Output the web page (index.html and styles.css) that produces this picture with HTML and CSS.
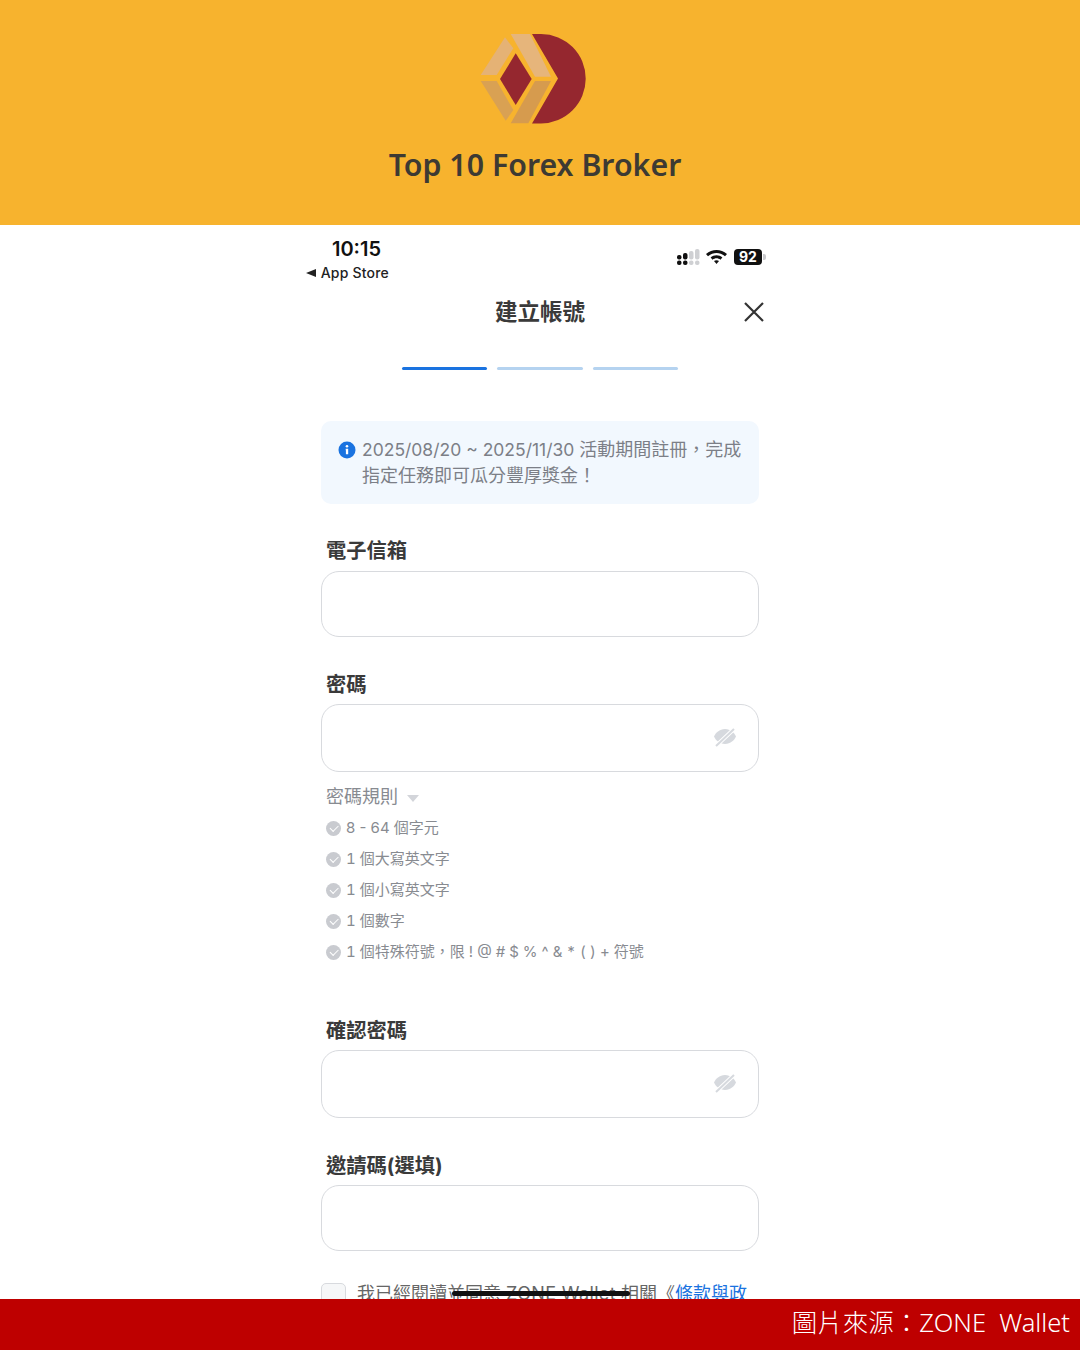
FILE: index.html
```html
<!DOCTYPE html>
<html lang="zh-Hant">
<head>
  <meta charset="UTF-8">
  <meta name="viewport" content="width=device-width, initial-scale=1.0">
  <title>Top 10 Forex Broker - 建立帳號</title>
  <link rel="stylesheet" href="styles.css">
</head>
<body>
  <header class="brand">
    <svg class="brand-logo" viewBox="0 0 108 98" aria-hidden="true">
      <path fill="#95272f" d="M52 4H61A44.7 44.7 0 0 1 61 93.4H52L78 48.5Z"/>
      <path fill="#95272f" d="M35.7 23.3L51.7 49L35.7 75L20 49Z"/>
      <path fill="#e5b275" d="M25 7.3L33.3 18.3L16.7 45H.7Z"/>
      <path fill="#e6b57b" d="M30.7 4H50L71 46.7H55Z"/>
      <path fill="#d9a153" d="M.7 51H16.7L33.3 80L25.7 90.7Z"/>
      <path fill="#d69b4e" d="M55 51H71L48.3 93.3H30.7Z"/>
    </svg>
    <h2 class="brand-name">Top 10 Forex Broker</h2>
  </header>

  <main class="phone">
    <div class="status-bar">
      <div class="status-left">
        <div class="clock">10:15</div>
        <div class="back-app"><span class="back-arrow"></span>App Store</div>
      </div>
      <div class="status-right">
        <svg width="24" height="16" viewBox="0 0 24 16" aria-hidden="true">
          <g fill="#111">
            <rect x="0" y="6" width="4.500" height="4.500" rx="2"/><rect x="0" y="11.500" width="4.500" height="4.500" rx="2"/>
            <rect x="6" y="4" width="4.500" height="6.500" rx="2"/><rect x="6" y="11.500" width="4.500" height="4.500" rx="2"/>
          </g>
          <g fill="#cfd0d3">
            <rect x="12" y="2" width="4.500" height="8.500" rx="2"/><rect x="12" y="11.500" width="4.500" height="4.500" rx="2"/>
            <rect x="18" y="0" width="4.500" height="10.500" rx="2"/><rect x="18" y="11.500" width="4.500" height="4.500" rx="2"/>
          </g>
        </svg>
        <svg width="21" height="16" viewBox="0 0 21 16" aria-hidden="true">
          <path fill="#111" d="M10.500 1C14.200 1 18 2.400 21 5.100L19 7.300C16.600 5.200 13.600 4.100 10.500 4.100S4.400 5.200 2 7.300L0 5.100C3 2.400 6.800 1 10.500 1Z"/>
          <path fill="#111" d="M10.500 6.200C12.600 6.200 14.800 7 16.400 8.500L14.400 10.700C13.300 9.700 11.900 9.200 10.500 9.200S7.700 9.700 6.600 10.700L4.600 8.500C6.200 7 8.400 6.200 10.500 6.200Z"/>
          <path fill="#111" d="M10.500 11.200C11.400 11.200 12.300 11.500 13 12.100L10.500 15L8 12.100C8.700 11.500 9.600 11.200 10.500 11.200Z"/>
        </svg>
        <div class="battery"><span class="battery-level">92</span><span class="battery-cap"></span></div>
      </div>
    </div>

    <div class="nav-title">
      <h1>建立帳號</h1>
      <svg class="close-icon" width="22" height="22" viewBox="0 0 22 22" aria-hidden="true">
        <path d="M2 2L20 20M20 2L2 20" stroke="#333" stroke-width="2.200" fill="none"/>
      </svg>
    </div>

    <div class="steps">
      <span class="step step-active"></span>
      <span class="step"></span>
      <span class="step"></span>
    </div>

    <div class="notice">
      <svg class="notice-icon" width="18" height="18" viewBox="0 0 18 18" aria-hidden="true">
        <circle cx="9" cy="9" r="8.500" fill="#1a73e0"/>
        <circle cx="9" cy="5.300" r="1.300" fill="#fff"/>
        <path d="M7.700 7.800H10.200V13.200H7.900V9.300H7.700Z" fill="#fff"/>
      </svg>
      <p><span class="dates">2025/08/20 ~ 2025/11/30 </span>活動期間註冊，完成指定任務即可瓜分豐厚獎金！</p>
    </div>

    <form class="signup">
      <div class="field">
        <label>電子信箱</label>
        <div class="input"></div>
      </div>

      <div class="field">
        <label>密碼</label>
        <div class="input input-tall">
          <svg class="eye" width="24" height="20" viewBox="0 0 24 20" aria-hidden="true">
            <path fill="#d6d9de" d="M12 2C6.500 2 2.500 6 1 9.500C2.500 13 6.500 17 12 17C17.500 17 21.500 13 23 9.500C21.500 6 17.500 2 12 2Z"/>
            <path d="M3 19L21 2" stroke="#fff" stroke-width="4"/>
            <path d="M3 19L21 2" stroke="#d6d9de" stroke-width="2"/>
          </svg>
        </div>
      </div>

      <div class="rules">
        <div class="rules-title">密碼規則<span class="rules-caret"></span></div>
        <ul class="rules-list">
          <li class="rule-range"><span class="check"></span>8 - 64 個字元</li>
          <li><span class="check"></span>1 個大寫英文字</li>
          <li><span class="check"></span>1 個小寫英文字</li>
          <li><span class="check"></span>1 個數字</li>
          <li><span class="check"></span>1 個特殊符號，限 ! @ # $ % ^ &amp; * ( ) + 符號</li>
        </ul>
      </div>

      <div class="field">
        <label>確認密碼</label>
        <div class="input input-tall">
          <svg class="eye" width="24" height="20" viewBox="0 0 24 20" aria-hidden="true">
            <path fill="#d6d9de" d="M12 2C6.500 2 2.500 6 1 9.500C2.500 13 6.500 17 12 17C17.500 17 21.500 13 23 9.500C21.500 6 17.500 2 12 2Z"/>
            <path d="M3 19L21 2" stroke="#fff" stroke-width="4"/>
            <path d="M3 19L21 2" stroke="#d6d9de" stroke-width="2"/>
          </svg>
        </div>
      </div>

      <div class="field">
        <label>邀請碼(選填)</label>
        <div class="input"></div>
      </div>

      <div class="agree">
        <span class="checkbox"></span>
        <p>我已經閱讀並同意 <span class="wallet">ZONE Wallet</span> 相關《<a>條款與政</a></p>
        <span class="scribble"></span>
      </div>
    </form>
  </main>

  <footer class="credit">圖片來源：ZONE&nbsp; Wallet</footer>
</body>
</html>
```

FILE: styles.css
```css
html, body {
  margin: 0;
  padding: 0;
}
body {
  position: relative;
  width: 1080px;
  height: 1350px;
  overflow: hidden;
  background-color: #fff;
  font-family: Inter, "Noto Sans CJK TC", sans-serif;
  color: #333;
}

/* top banner */
.brand {
  height: 225px;
  box-sizing: border-box;
  padding: 30px 10px 0 0;
  background-color: #f7b32e;
  display: flex;
  flex-direction: column;
  align-items: center;
}
.brand-logo {
  width: 108px;
  height: 98px;
  display: block;
  margin-right: 2px;
}
.brand-name {
  margin: 16px 0 0;
  font-family: "Noto Sans", sans-serif;
  font-size: 30.300px;
  line-height: 42px;
  font-weight: 600;
  color: #3d3a33;
}

/* phone screenshot */
.phone {
  width: 470px;
  margin: 0 auto;
  box-sizing: border-box;
  padding: 0 16px;
}
.status-bar {
  height: 62px;
  padding-top: 11px;
  box-sizing: border-box;
  display: flex;
  justify-content: space-between;
}
.status-left {
  margin-left: -15px;
  width: 83px;
  display: flex;
  flex-direction: column;
  align-items: flex-end;
}
.clock {
  width: 100%;
  box-sizing: border-box;
  padding-right: 8px;
  margin-top: 1px;
  text-align: right;
  font-size: 20px;
  line-height: 24px;
  font-weight: 600;
  color: #111;
}
.back-app {
  display: flex;
  align-items: center;
  white-space: nowrap;
  font-size: 14px;
  line-height: 18px;
  font-weight: 500;
  letter-spacing: .2px;
  color: #222;
  margin-top: 3px;
}
.back-arrow {
  width: 0;
  height: 0;
  border-style: solid;
  border-width: 4.500px 10px 4.500px 0;
  border-color: transparent #222 transparent transparent;
  margin-right: 5px;
}
.status-right {
  display: flex;
  align-items: flex-start;
  gap: 5px;
  padding-top: 13px;
  margin-right: -7px;
}
.battery {
  display: flex;
  align-items: center;
  margin-left: 2px;
}
.battery-level {
  width: 28px;
  height: 16px;
  border-radius: 4px;
  background-color: #111;
  color: #fff;
  font-size: 14px;
  line-height: 16px;
  font-weight: 700;
  text-align: center;
}
.battery-cap {
  width: 3px;
  height: 6px;
  margin-left: 1px;
  background-color: #c9c9cc;
  border-radius: 0 2px 2px 0;
}

.nav-title {
  position: relative;
  height: 50px;
  display: flex;
  align-items: center;
  justify-content: center;
}
.nav-title h1 {
  margin: 0;
  font-size: 22.500px;
  line-height: 30px;
  font-weight: 700;
  color: #3a3a3a;
}
.close-icon {
  position: absolute;
  right: -6px;
  top: 14px;
}

.steps {
  display: flex;
  justify-content: center;
  gap: 10px;
  margin-top: 30px;
}
.step {
  width: 85.500px;
  height: 3px;
  border-radius: 2px;
  background-color: #b5d3f0;
}
.step-active {
  background-color: #1a73e0;
}

.notice {
  margin-top: 51px;
  height: 83px;
  box-sizing: border-box;
  padding: 16px 14px 0 17px;
  display: flex;
  gap: 6px;
  background-color: #f2f8fe;
  border-radius: 10px;
}
.notice-icon {
  flex: none;
  margin-top: 4px;
}
.notice p {
  margin: 0;
  font-size: 18px;
  line-height: 26px;
  color: #7c7f87;
}
.dates {
  font-size: 17.500px;
}

.signup {
  display: block;
}
.field {
  margin-top: 34px;
}
.field:first-child {
  margin-top: 33px;
}
.field label {
  display: block;
  padding-left: 5px;
  font-size: 20.250px;
  line-height: 27px;
  font-weight: 700;
  color: #3a3a3a;
}
.input {
  position: relative;
  height: 66px;
  margin-top: 6px;
  box-sizing: border-box;
  border: 1.500px solid #d8dade;
  border-radius: 18px;
  background-color: #fff;
}
.field:first-child .input {
  margin-top: 7px;
}
.input-tall {
  height: 68px;
}
.eye {
  position: absolute;
  right: 21px;
  top: 22px;
}

.rules {
  margin-top: 12px;
  padding-left: 5px;
  color: #888b91;
}
.rules-title {
  display: flex;
  align-items: center;
  font-size: 18px;
  line-height: 26px;
}
.rules-caret {
  width: 0;
  height: 0;
  margin-left: 9px;
  margin-top: 2px;
  border-style: solid;
  border-width: 7px 6.500px 0;
  border-color: #d3d5da transparent transparent;
}
.rules-list {
  list-style: none;
  margin: 1px 0 0;
  padding: 0;
}
.rules-list li {
  display: flex;
  align-items: center;
  height: 31px;
  font-size: 15px;
  font-variant-numeric: tabular-nums;
  white-space: pre-wrap;
}
.rules-list .rule-range {
  font-variant-numeric: normal;
}
.check {
  position: relative;
  flex: none;
  width: 15px;
  height: 15px;
  margin: 4px 5px 0 0;
  border-radius: 50%;
  background-color: #c9cbd0;
}
.check::after {
  content: "";
  position: absolute;
  left: 3.500px;
  top: 3.500px;
  width: 7px;
  height: 3.500px;
  border-left: 1.500px solid #fff;
  border-bottom: 1.500px solid #fff;
  transform: rotate(-45deg);
}
.rules + .field {
  margin-top: 51px;
}

.agree {
  position: relative;
  margin-top: 32px;
  display: flex;
  gap: 11px;
}
.checkbox {
  flex: none;
  width: 25px;
  height: 25px;
  box-sizing: border-box;
  border: 1.500px solid #d8dade;
  border-radius: 5px;
  background-color: #f6f7f8;
}
.agree p {
  margin: 0;
  font-size: 18px;
  line-height: 22px;
  color: #666;
  white-space: nowrap;
}
.agree a {
  color: #1a73e0;
}
.wallet {
  letter-spacing: .36px;
}
.scribble {
  position: absolute;
  left: 131px;
  top: 8px;
  width: 178px;
  height: 5px;
  border-radius: 3px;
  background-color: #111;
}

/* source bar */
.credit {
  position: absolute;
  left: 0;
  right: 0;
  bottom: 0;
  height: 51px;
  box-sizing: border-box;
  padding-right: 10px;
  background-color: #be0000;
  color: #fff;
  font-family: "Noto Sans", "Noto Sans CJK TC", sans-serif;
  font-size: 25.500px;
  line-height: 47px;
  font-weight: 300;
  text-align: right;
}
```
